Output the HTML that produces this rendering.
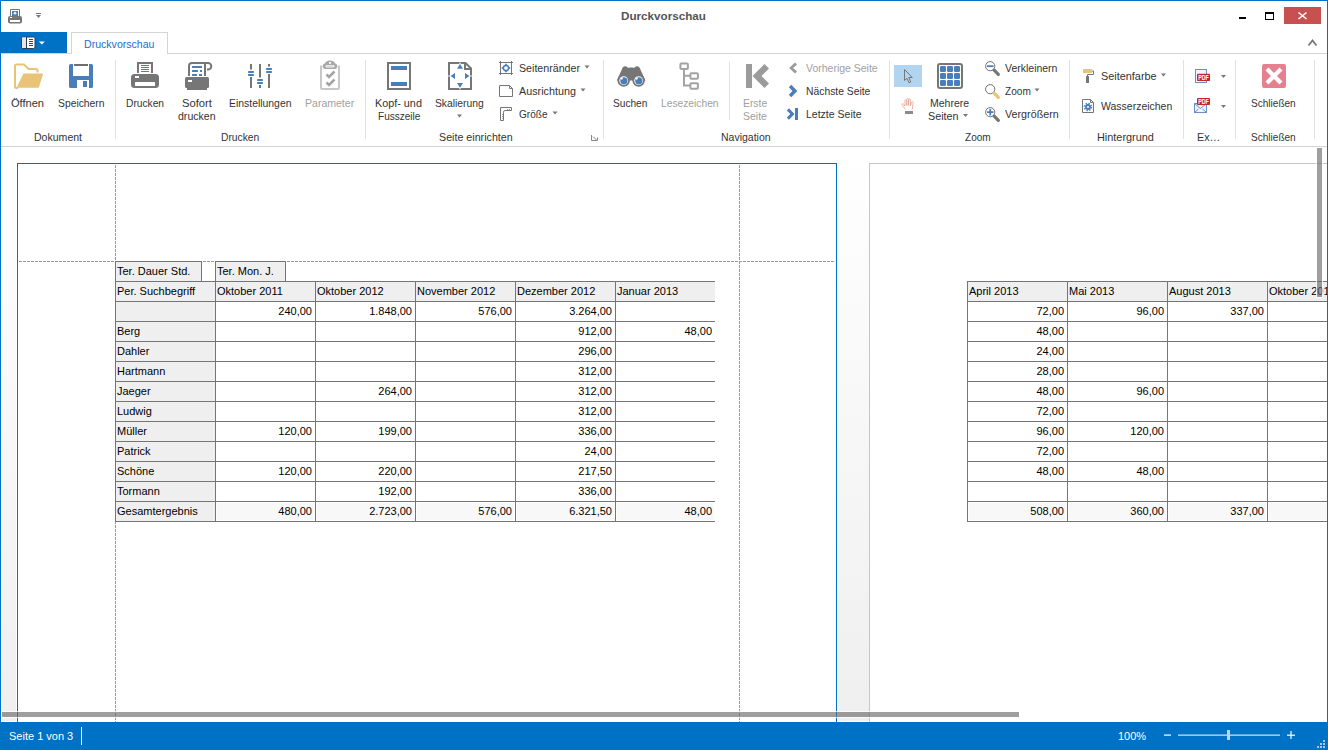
<!DOCTYPE html><html><head><meta charset="utf-8"><style>
*{box-sizing:border-box;margin:0;padding:0}
html,body{width:1328px;height:750px;overflow:hidden;background:#fff;font-family:"Liberation Sans",sans-serif}
.a{position:absolute}
.t{position:absolute;white-space:nowrap;font-size:11px;color:#444;line-height:13px}
.dis{color:#a6a6a6}
.sep{position:absolute;width:1px;background:#e2e2e2;top:60px;height:80px}
.c{position:absolute;font-size:11px;color:#000;line-height:19px;height:19px;white-space:nowrap;overflow:hidden;padding:0 3px 0 1px}
.r{text-align:right}
.g{background:#efefef}
.tg{background:#f8f8f8;box-shadow:inset 0 0 0 1px #fff}
.hl{position:absolute;height:1px;background:#757575}
.vl{position:absolute;width:1px;background:#757575}
</style></head><body>
<div class="a" style="left:1px;top:147px;width:1326px;height:575px;background:linear-gradient(#fff,#efefef)"></div>
<div class="a" style="left:1px;top:147px;width:1px;height:575px;background:#fff"></div>
<div class="a" style="left:1px;top:721px;width:1326px;height:1px;background:#fff"></div>
<div class="a" style="left:16px;top:162px;width:822px;height:600px;background:#fff"></div>
<div class="a" style="left:17px;top:163px;width:820px;height:600px;background:#fff;border:1px solid #0072c6"></div>
<div class="a" style="left:18px;top:261px;width:817px;height:1px;background:repeating-linear-gradient(90deg,transparent 0 1px,#999 1px 4px)"></div>
<div class="a" style="left:115px;top:164px;width:1px;height:560px;background:repeating-linear-gradient(180deg,transparent 0 1px,#999 1px 4px)"></div>
<div class="a" style="left:739px;top:164px;width:1px;height:560px;background:repeating-linear-gradient(180deg,transparent 0 1px,#999 1px 4px)"></div>
<div class="c g" style="left:116px;top:282px;width:99px">Per. Suchbegriff</div>
<div class="c g" style="left:216px;top:282px;width:99px">Oktober 2011</div>
<div class="c g" style="left:316px;top:282px;width:99px">Oktober 2012</div>
<div class="c g" style="left:416px;top:282px;width:99px">November 2012</div>
<div class="c g" style="left:516px;top:282px;width:99px">Dezember 2012</div>
<div class="c g" style="left:616px;top:282px;width:99px">Januar 2013</div>
<div class="c g" style="left:116px;top:302px;width:99px"></div>
<div class="c r" style="left:216px;top:302px;width:99px">240,00</div>
<div class="c r" style="left:316px;top:302px;width:99px">1.848,00</div>
<div class="c r" style="left:416px;top:302px;width:99px">576,00</div>
<div class="c r" style="left:516px;top:302px;width:99px">3.264,00</div>
<div class="c r" style="left:616px;top:302px;width:99px"></div>
<div class="c g" style="left:116px;top:322px;width:99px">Berg</div>
<div class="c r" style="left:216px;top:322px;width:99px"></div>
<div class="c r" style="left:316px;top:322px;width:99px"></div>
<div class="c r" style="left:416px;top:322px;width:99px"></div>
<div class="c r" style="left:516px;top:322px;width:99px">912,00</div>
<div class="c r" style="left:616px;top:322px;width:99px">48,00</div>
<div class="c g" style="left:116px;top:342px;width:99px">Dahler</div>
<div class="c r" style="left:216px;top:342px;width:99px"></div>
<div class="c r" style="left:316px;top:342px;width:99px"></div>
<div class="c r" style="left:416px;top:342px;width:99px"></div>
<div class="c r" style="left:516px;top:342px;width:99px">296,00</div>
<div class="c r" style="left:616px;top:342px;width:99px"></div>
<div class="c g" style="left:116px;top:362px;width:99px">Hartmann</div>
<div class="c r" style="left:216px;top:362px;width:99px"></div>
<div class="c r" style="left:316px;top:362px;width:99px"></div>
<div class="c r" style="left:416px;top:362px;width:99px"></div>
<div class="c r" style="left:516px;top:362px;width:99px">312,00</div>
<div class="c r" style="left:616px;top:362px;width:99px"></div>
<div class="c g" style="left:116px;top:382px;width:99px">Jaeger</div>
<div class="c r" style="left:216px;top:382px;width:99px"></div>
<div class="c r" style="left:316px;top:382px;width:99px">264,00</div>
<div class="c r" style="left:416px;top:382px;width:99px"></div>
<div class="c r" style="left:516px;top:382px;width:99px">312,00</div>
<div class="c r" style="left:616px;top:382px;width:99px"></div>
<div class="c g" style="left:116px;top:402px;width:99px">Ludwig</div>
<div class="c r" style="left:216px;top:402px;width:99px"></div>
<div class="c r" style="left:316px;top:402px;width:99px"></div>
<div class="c r" style="left:416px;top:402px;width:99px"></div>
<div class="c r" style="left:516px;top:402px;width:99px">312,00</div>
<div class="c r" style="left:616px;top:402px;width:99px"></div>
<div class="c g" style="left:116px;top:422px;width:99px">Müller</div>
<div class="c r" style="left:216px;top:422px;width:99px">120,00</div>
<div class="c r" style="left:316px;top:422px;width:99px">199,00</div>
<div class="c r" style="left:416px;top:422px;width:99px"></div>
<div class="c r" style="left:516px;top:422px;width:99px">336,00</div>
<div class="c r" style="left:616px;top:422px;width:99px"></div>
<div class="c g" style="left:116px;top:442px;width:99px">Patrick</div>
<div class="c r" style="left:216px;top:442px;width:99px"></div>
<div class="c r" style="left:316px;top:442px;width:99px"></div>
<div class="c r" style="left:416px;top:442px;width:99px"></div>
<div class="c r" style="left:516px;top:442px;width:99px">24,00</div>
<div class="c r" style="left:616px;top:442px;width:99px"></div>
<div class="c g" style="left:116px;top:462px;width:99px">Schöne</div>
<div class="c r" style="left:216px;top:462px;width:99px">120,00</div>
<div class="c r" style="left:316px;top:462px;width:99px">220,00</div>
<div class="c r" style="left:416px;top:462px;width:99px"></div>
<div class="c r" style="left:516px;top:462px;width:99px">217,50</div>
<div class="c r" style="left:616px;top:462px;width:99px"></div>
<div class="c g" style="left:116px;top:482px;width:99px">Tormann</div>
<div class="c r" style="left:216px;top:482px;width:99px"></div>
<div class="c r" style="left:316px;top:482px;width:99px">192,00</div>
<div class="c r" style="left:416px;top:482px;width:99px"></div>
<div class="c r" style="left:516px;top:482px;width:99px">336,00</div>
<div class="c r" style="left:616px;top:482px;width:99px"></div>
<div class="c g" style="left:116px;top:502px;width:99px">Gesamtergebnis</div>
<div class="c r tg" style="left:216px;top:502px;width:99px">480,00</div>
<div class="c r tg" style="left:316px;top:502px;width:99px">2.723,00</div>
<div class="c r tg" style="left:416px;top:502px;width:99px">576,00</div>
<div class="c r tg" style="left:516px;top:502px;width:99px">6.321,50</div>
<div class="c r tg" style="left:616px;top:502px;width:99px">48,00</div>
<div class="hl" style="left:115px;top:281px;width:600px"></div>
<div class="hl" style="left:115px;top:301px;width:600px"></div>
<div class="hl" style="left:115px;top:321px;width:600px"></div>
<div class="hl" style="left:115px;top:341px;width:600px"></div>
<div class="hl" style="left:115px;top:361px;width:600px"></div>
<div class="hl" style="left:115px;top:381px;width:600px"></div>
<div class="hl" style="left:115px;top:401px;width:600px"></div>
<div class="hl" style="left:115px;top:421px;width:600px"></div>
<div class="hl" style="left:115px;top:441px;width:600px"></div>
<div class="hl" style="left:115px;top:461px;width:600px"></div>
<div class="hl" style="left:115px;top:481px;width:600px"></div>
<div class="hl" style="left:115px;top:501px;width:600px"></div>
<div class="hl" style="left:115px;top:521px;width:600px"></div>
<div class="vl" style="left:115px;top:281px;height:241px"></div>
<div class="vl" style="left:215px;top:281px;height:241px"></div>
<div class="vl" style="left:315px;top:281px;height:241px"></div>
<div class="vl" style="left:415px;top:281px;height:241px"></div>
<div class="vl" style="left:515px;top:281px;height:241px"></div>
<div class="vl" style="left:615px;top:281px;height:241px"></div>
<div class="c g" style="left:116px;top:262px;width:85px">Ter. Dauer Std.</div>
<div class="a" style="left:115px;top:261px;width:87px;height:21px;border:1px solid #757575;border-bottom:none"></div>
<div class="c g" style="left:216px;top:262px;width:69px">Ter. Mon. J.</div>
<div class="a" style="left:215px;top:261px;width:71px;height:21px;border:1px solid #757575;border-bottom:none"></div>
<div class="a" style="left:869px;top:163px;width:600px;height:600px;background:#fff;border:1px solid #c6c6c6"></div>
<div class="c g" style="left:968px;top:282px;width:99px">April 2013</div>
<div class="c g" style="left:1068px;top:282px;width:99px">Mai 2013</div>
<div class="c g" style="left:1168px;top:282px;width:99px">August 2013</div>
<div class="c g" style="left:1268px;top:282px;width:72px">Oktober 2013</div>
<div class="c r" style="left:968px;top:302px;width:99px">72,00</div>
<div class="c r" style="left:1068px;top:302px;width:99px">96,00</div>
<div class="c r" style="left:1168px;top:302px;width:99px">337,00</div>
<div class="c r" style="left:1268px;top:302px;width:72px"></div>
<div class="c r" style="left:968px;top:322px;width:99px">48,00</div>
<div class="c r" style="left:1068px;top:322px;width:99px"></div>
<div class="c r" style="left:1168px;top:322px;width:99px"></div>
<div class="c r" style="left:1268px;top:322px;width:72px"></div>
<div class="c r" style="left:968px;top:342px;width:99px">24,00</div>
<div class="c r" style="left:1068px;top:342px;width:99px"></div>
<div class="c r" style="left:1168px;top:342px;width:99px"></div>
<div class="c r" style="left:1268px;top:342px;width:72px"></div>
<div class="c r" style="left:968px;top:362px;width:99px">28,00</div>
<div class="c r" style="left:1068px;top:362px;width:99px"></div>
<div class="c r" style="left:1168px;top:362px;width:99px"></div>
<div class="c r" style="left:1268px;top:362px;width:72px"></div>
<div class="c r" style="left:968px;top:382px;width:99px">48,00</div>
<div class="c r" style="left:1068px;top:382px;width:99px">96,00</div>
<div class="c r" style="left:1168px;top:382px;width:99px"></div>
<div class="c r" style="left:1268px;top:382px;width:72px"></div>
<div class="c r" style="left:968px;top:402px;width:99px">72,00</div>
<div class="c r" style="left:1068px;top:402px;width:99px"></div>
<div class="c r" style="left:1168px;top:402px;width:99px"></div>
<div class="c r" style="left:1268px;top:402px;width:72px"></div>
<div class="c r" style="left:968px;top:422px;width:99px">96,00</div>
<div class="c r" style="left:1068px;top:422px;width:99px">120,00</div>
<div class="c r" style="left:1168px;top:422px;width:99px"></div>
<div class="c r" style="left:1268px;top:422px;width:72px"></div>
<div class="c r" style="left:968px;top:442px;width:99px">72,00</div>
<div class="c r" style="left:1068px;top:442px;width:99px"></div>
<div class="c r" style="left:1168px;top:442px;width:99px"></div>
<div class="c r" style="left:1268px;top:442px;width:72px"></div>
<div class="c r" style="left:968px;top:462px;width:99px">48,00</div>
<div class="c r" style="left:1068px;top:462px;width:99px">48,00</div>
<div class="c r" style="left:1168px;top:462px;width:99px"></div>
<div class="c r" style="left:1268px;top:462px;width:72px"></div>
<div class="c r" style="left:968px;top:482px;width:99px"></div>
<div class="c r" style="left:1068px;top:482px;width:99px"></div>
<div class="c r" style="left:1168px;top:482px;width:99px"></div>
<div class="c r" style="left:1268px;top:482px;width:72px"></div>
<div class="c r tg" style="left:968px;top:502px;width:99px">508,00</div>
<div class="c r tg" style="left:1068px;top:502px;width:99px">360,00</div>
<div class="c r tg" style="left:1168px;top:502px;width:99px">337,00</div>
<div class="c r tg" style="left:1268px;top:502px;width:72px"></div>
<div class="hl" style="left:967px;top:281px;width:373px"></div>
<div class="hl" style="left:967px;top:301px;width:373px"></div>
<div class="hl" style="left:967px;top:321px;width:373px"></div>
<div class="hl" style="left:967px;top:341px;width:373px"></div>
<div class="hl" style="left:967px;top:361px;width:373px"></div>
<div class="hl" style="left:967px;top:381px;width:373px"></div>
<div class="hl" style="left:967px;top:401px;width:373px"></div>
<div class="hl" style="left:967px;top:421px;width:373px"></div>
<div class="hl" style="left:967px;top:441px;width:373px"></div>
<div class="hl" style="left:967px;top:461px;width:373px"></div>
<div class="hl" style="left:967px;top:481px;width:373px"></div>
<div class="hl" style="left:967px;top:501px;width:373px"></div>
<div class="hl" style="left:967px;top:521px;width:373px"></div>
<div class="vl" style="left:967px;top:281px;height:241px"></div>
<div class="vl" style="left:1067px;top:281px;height:241px"></div>
<div class="vl" style="left:1167px;top:281px;height:241px"></div>
<div class="vl" style="left:1267px;top:281px;height:241px"></div>
<div class="a" style="left:2px;top:712px;width:1017px;height:5px;background:rgba(105,105,105,.64);box-shadow:0 0 0 1px rgba(255,255,255,.75)"></div>
<div class="a" style="left:1317px;top:148px;width:5px;height:149px;background:rgba(105,105,105,.64);box-shadow:0 0 0 1px rgba(255,255,255,.75)"></div>
<div class="a" style="left:1px;top:0;width:1326px;height:147px;background:#fff"></div>
<div class="t" style="left:621px;top:10px;font-size:11px;font-weight:bold;color:#555;transform:scaleX(1.06);transform-origin:0 0">Durckvorschau</div>
<div class="a" style="left:1px;top:32px;width:66px;height:22px;background:#0072c6"></div>
<div class="a" style="left:1px;top:53px;width:1326px;height:1px;background:#d4d4d4"></div>
<div class="a" style="left:71px;top:32px;width:97px;height:22px;border:1px solid #d4d4d4;border-bottom:none;background:#fff"></div>
<div class="t" style="left:83.7px;top:38px;color:#1a6fd0;transform:scaleX(0.961);transform-origin:0 0">Druckvorschau</div>
<div class="a" style="left:1px;top:146px;width:1326px;height:1px;background:#d4d4d4"></div>
<svg class="a" style="left:0;top:0" width="1328" height="147"><rect x="115" y="60" width="1" height="79" fill="#e1e1e1"/>
<rect x="365" y="60" width="1" height="79" fill="#e1e1e1"/>
<rect x="603" y="60" width="1" height="79" fill="#e1e1e1"/>
<rect x="729" y="62" width="1" height="58" fill="#e1e1e1"/>
<rect x="889" y="60" width="1" height="79" fill="#e1e1e1"/>
<rect x="1069" y="60" width="1" height="79" fill="#e1e1e1"/>
<rect x="1183" y="60" width="1" height="79" fill="#e1e1e1"/>
<rect x="1235" y="60" width="1" height="79" fill="#e1e1e1"/>
<rect x="1314" y="60" width="1" height="79" fill="#e1e1e1"/>

<!-- quick access printer -->
<path d="M10.5 16V9.5H19.5V16" fill="none" stroke="#767676" stroke-width="1"/>
<rect x="12" y="11" width="6" height="5" fill="#4a7ebb"/>
<circle cx="15" cy="13.2" r="1.4" fill="#e8eef8"/>
<rect x="8" y="16" width="14" height="7.5" rx="2" fill="#767676"/>
<rect x="10" y="17" width="2" height="1" fill="#fff"/>
<rect x="10" y="20" width="10" height="2" fill="#fff"/>
<rect x="36" y="13" width="5" height="1" fill="#767676"/>
<path d="M36 15h5l-2.5 3z" fill="#767676"/>
<!-- file button icon -->
<rect x="21.5" y="37" width="13.5" height="11.5" rx="1.5" fill="#fff" stroke="#2a3f55" stroke-width="1"/>
<rect x="22" y="37.5" width="4" height="10.5" fill="#e6e6e6"/>
<rect x="26" y="37" width="1" height="12" fill="#2a3f55"/>
<rect x="29" y="39" width="4" height="1" fill="#444"/><rect x="29" y="41" width="4" height="1" fill="#444"/><rect x="29" y="43" width="4" height="1" fill="#444"/><rect x="29" y="45" width="4" height="1" fill="#444"/>
<path d="M38.8 41.5h6l-3 3z" fill="#fff"/>
<!-- Oeffnen folder -->
<path d="M37.5 72.5V70.5a1.5 1.5 0 0 0-1.5-1.5h-7.5l-4.5-4.5h-7.5a1.5 1.5 0 0 0-1.5 1.5V86.5a1.5 1.5 0 0 0 1.5 1.5h1.5" fill="none" stroke="#e9c476" stroke-width="2"/>
<path d="M23.5 73.5H42a1 1 0 0 1 .9 1.3L38.7 87.8H16.5z" fill="#e9c476"/>
<!-- floppy -->
<path d="M70.5 64H73V76H89V64H91.5A1.5 1.5 0 0 1 93 65.5V86.5A1.5 1.5 0 0 1 91.5 88H89V80H77V88H70.5A1.5 1.5 0 0 1 69 86.5V65.5A1.5 1.5 0 0 1 70.5 64z" fill="#4a7ebb"/>
<rect x="74" y="64" width="14" height="2" fill="#6d6d6d"/>
<rect x="83" y="81" width="4" height="6" fill="#4a7ebb"/>
<!-- printer -->
<path d="M138 73V63h14v10" fill="none" stroke="#767676" stroke-width="2"/>
<rect x="141" y="65" width="8" height="1" fill="#4a7ebb"/><rect x="141" y="67" width="8" height="1" fill="#4a7ebb"/><rect x="141" y="69" width="8" height="1" fill="#4a7ebb"/><rect x="141" y="71" width="8" height="1" fill="#4a7ebb"/>
<rect x="131" y="74" width="28" height="14" rx="3.5" fill="#767676"/>
<rect x="135" y="76" width="4" height="2" fill="#fff"/>
<rect x="135" y="82" width="20" height="4" rx="0.5" fill="#fff"/>
<!-- sofort drucken -->
<path d="M189 76V66a3 3 0 0 1 3-3h16a3.3 3.3 0 0 1 0 6.6h-1" fill="none" stroke="#767676" stroke-width="2"/>
<path d="M205 76V64" fill="none" stroke="#767676" stroke-width="2"/>
<rect x="192" y="66" width="10" height="2" rx="0.5" fill="#4a7ebb"/>
<rect x="192" y="70" width="6" height="2" rx="0.5" fill="#4a7ebb"/><rect x="200" y="70" width="2" height="2" fill="#4a7ebb"/>
<rect x="192" y="74" width="5" height="2" rx="0.5" fill="#4a7ebb"/><rect x="199" y="74" width="3" height="2" fill="#4a7ebb"/>
<rect x="185" y="77" width="24" height="11" rx="1.5" fill="#767676"/>
<rect x="187" y="86" width="20" height="4" fill="#767676"/>
<rect x="188" y="80" width="4" height="2" fill="#fff"/>
<!-- einstellungen -->
<rect x="250" y="64" width="2" height="5.5" fill="#767676"/><rect x="250" y="77" width="2" height="11" fill="#767676"/>
<rect x="248" y="71" width="6" height="2" rx="0.8" fill="#4a7ebb"/><rect x="248" y="74" width="6" height="2" rx="0.8" fill="#4a7ebb"/>
<rect x="259" y="64" width="2" height="13.5" fill="#767676"/><rect x="259" y="85" width="2" height="3" fill="#767676"/>
<rect x="257" y="79" width="6" height="2" rx="0.8" fill="#4a7ebb"/><rect x="257" y="82" width="6" height="2" rx="0.8" fill="#4a7ebb"/>
<rect x="268" y="64" width="2" height="2.5" fill="#767676"/><rect x="268" y="74" width="2" height="14" fill="#767676"/>
<rect x="266" y="68" width="6" height="2" rx="0.8" fill="#4a7ebb"/><rect x="266" y="71" width="6" height="2" rx="0.8" fill="#4a7ebb"/>
<!-- parameter (disabled) -->
<path d="M322.5 66.5H321V87.5a1.5 1.5 0 0 0 1.5 1.5H337.5a1.5 1.5 0 0 0 1.5-1.5V66.5H337.5" fill="none" stroke="#c8c8c8" stroke-width="2"/>
<path d="M325 63.5a5 3 0 0 1 10 0h0.5a2 2 0 0 1 1.5 2v1.5a2 2 0 0 1-2 2h-10a2 2 0 0 1-2-2v-1.5a2 2 0 0 1 1.5-2z" fill="#a8a8a8"/>
<rect x="325.5" y="65.2" width="9" height="2.4" rx="1" fill="#fff"/>
<rect x="326.5" y="66.1" width="7" height="0.7" fill="#c8c8c8"/>
<rect x="329" y="62" width="2" height="1.8" fill="#fff"/>
<path d="M326.5 74.5l2.5 2.5 5.5-5.5M326.5 82.5l2.5 2.5 5.5-5.5" fill="none" stroke="#a3a3a3" stroke-width="2.5"/>
<!-- kopf fusszeile -->
<rect x="388" y="63" width="22" height="26" fill="none" stroke="#767676" stroke-width="2"/>
<rect x="391" y="66" width="16" height="4" fill="#4a7ebb"/>
<rect x="391" y="82" width="16" height="4" fill="#4a7ebb"/>
<!-- skalierung -->
<path d="M449 63H465.5L471 68.5V89H449z" fill="#fff" stroke="#767676" stroke-width="2"/>
<path d="M465 63V69H471" fill="none" stroke="#767676" stroke-width="2"/>
<circle cx="460" cy="63.2" r="0.8" fill="#fff"/><circle cx="460" cy="88.8" r="0.8" fill="#fff"/><circle cx="449" cy="76" r="0.8" fill="#fff"/><circle cx="471" cy="76" r="0.8" fill="#fff"/>
<path d="M460 64L463 68.8H457z M460 87.8L463 83H457z M450.5 76L455 73V79z M469.5 76L465 73V79z" fill="#4a7ebb"/>
<path d="M457.0 114.5h5l-2.5 3z" fill="#777"/>
<!-- seitenraender -->
<path d="M499 62.5h14M499 73.5h14M500.5 61v14M511.5 61v14" stroke="#767676" stroke-width="1"/>
<circle cx="506" cy="68" r="2.6" fill="none" stroke="#4a7ebb" stroke-width="1.5"/>
<path d="M506 63.2L507.6 65.4H504.4z M506 72.8L507.6 70.6H504.4z M501.2 68L503.4 66.4V69.6z M510.8 68L508.6 66.4V69.6z" fill="#4a7ebb"/>
<path d="M584.5 65.5h5l-2.5 3z" fill="#777"/>
<!-- ausrichtung -->
<path d="M499.5 85.5H509.5L512.5 88.5V96.5H499.5z" fill="none" stroke="#767676" stroke-width="1"/>
<path d="M509.5 85.5v3h3" fill="none" stroke="#767676" stroke-width="1"/>
<path d="M580.5 88.5h5l-2.5 3z" fill="#777"/>
<!-- groesse -->
<path d="M500.5 107.5H511.5V110.5H505.2Q503.5 110.5 503.5 112.2V120.5H500.5z" fill="none" stroke="#767676" stroke-width="1"/>
<path d="M507.5 110.5v-1.2M509.5 110.5v-1.2M503.5 114.5h-1.2M503.5 116.5h-1.2M503.5 118.5h-1.2" stroke="#767676" stroke-width="1"/>
<path d="M552.5 111.5h5l-2.5 3z" fill="#777"/>
<!-- launcher -->
<path d="M591.5 135v5.5h6M593 136.5l4 4M597.5 137.5v3" fill="none" stroke="#888" stroke-width="1"/>
<!-- binoculars -->
<path d="M621.8 69.5c.5-2 1.5-3.3 3.2-3.3c1.5 0 2.6.9 3.1 1.8c1.8-.6 4.2-.6 6 0c.5-.9 1.6-1.8 3.1-1.8c1.7 0 2.7 1.3 3.2 3.3L645.5 80.5H616.8z" fill="#767676"/>
<circle cx="623.7" cy="80.6" r="6.2" fill="#767676"/><circle cx="638.6" cy="80.6" r="6.2" fill="#767676"/>
<circle cx="623.7" cy="80.6" r="4.4" fill="#fff"/><circle cx="638.6" cy="80.6" r="4.4" fill="#fff"/>
<circle cx="623.9" cy="80.8" r="3.6" fill="#4a7ebb"/><circle cx="638.8" cy="80.8" r="3.6" fill="#4a7ebb"/>
<circle cx="621.8" cy="78.6" r="1.1" fill="#fff"/><circle cx="636.7" cy="78.6" r="1.1" fill="#fff"/>
<!-- lesezeichen -->
<rect x="680.4" y="63.4" width="7.5" height="5.5" rx="1" fill="none" stroke="#a3a3a3" stroke-width="2"/>
<rect x="690.4" y="73.3" width="7.5" height="5.5" rx="1" fill="none" stroke="#a3a3a3" stroke-width="2"/>
<rect x="690.4" y="83.3" width="7.5" height="5.5" rx="1" fill="none" stroke="#a3a3a3" stroke-width="2"/>
<path d="M684 69.5V85.5H690M684 75.8H690" fill="none" stroke="#a3a3a3" stroke-width="2"/>
<!-- erste seite -->
<rect x="746" y="64" width="6" height="24" fill="#9b9b9b"/>
<path d="M764.5 64L769 68.5L761.5 76L769 83.5L764.5 88L752.5 76z" fill="#9b9b9b"/>
<!-- vorherige -->
<path d="M795 62.5L797 64.7L793 68L797 71.3L795 73.5L789.2 68z" fill="#9b9b9b"/>
<!-- naechste -->
<path d="M791.3 84.8L797.3 91L791.3 97.2L788.8 94.7L792.5 91L788.8 87.3z" fill="#4a7ebb"/>
<!-- letzte -->
<path d="M789 108.3L794.5 114L789 119.7L786.8 117.4L790.3 114L786.8 110.6z" fill="#4a7ebb"/>
<rect x="795" y="108" width="3" height="12" fill="#4a7ebb"/>
<!-- select tool -->
<rect x="894" y="65" width="28" height="22" fill="#b1d5f1"/>
<path d="M904.5 69.5V80.5L907 78.3L909 82.8L910.8 82L908.8 77.5H912.3z" fill="none" stroke="#777" stroke-width="1"/>
<!-- hand -->
<path d="M905.5 109.5L902 104.8c-.6-.8.6-1.8 1.3-1L905 106V100.5c0-1.1 1.8-1.1 1.8 0V105.5V99.3c0-1.1 1.8-1.1 1.8 0V105.5V99.8c0-1.1 1.8-1.1 1.8 0V106l1.2-3.8c.4-1 1.9-.6 1.6.4L912.2 109.5" fill="none" stroke="#e9ab9c" stroke-width="0.9"/>
<rect x="905" y="111" width="8" height="3" fill="#8a8a8a"/>
<!-- mehrere seiten -->
<rect x="938" y="64" width="24" height="24" rx="2" fill="none" stroke="#767676" stroke-width="2"/>

<rect x="940" y="66" width="6" height="6" rx="1.2" fill="#4a7ebb"/>
<rect x="940" y="73" width="6" height="6" rx="1.2" fill="#4a7ebb"/>
<rect x="940" y="80" width="6" height="6" rx="1.2" fill="#4a7ebb"/>
<rect x="947" y="66" width="6" height="6" rx="1.2" fill="#4a7ebb"/>
<rect x="947" y="73" width="6" height="6" rx="1.2" fill="#4a7ebb"/>
<rect x="947" y="80" width="6" height="6" rx="1.2" fill="#4a7ebb"/>
<rect x="954" y="66" width="6" height="6" rx="1.2" fill="#4a7ebb"/>
<rect x="954" y="73" width="6" height="6" rx="1.2" fill="#4a7ebb"/>
<rect x="954" y="80" width="6" height="6" rx="1.2" fill="#4a7ebb"/>

<path d="M963.0 114.0h5l-2.5 3z" fill="#777"/>
<!-- magnifiers -->
<circle cx="990.2" cy="66.2" r="4.6" fill="#fff" stroke="#707070" stroke-width="1"/>
<path d="M994.2 70.2L998.3 74.3" stroke="#767676" stroke-width="3.3" stroke-linecap="round"/>
<rect x="987" y="65.3" width="6.5" height="1.8" fill="#4a7ebb"/>
<circle cx="990.2" cy="89.2" r="4.6" fill="#fff" stroke="#707070" stroke-width="1"/>
<path d="M994.2 93.2L998.3 97.3" stroke="#e9c476" stroke-width="3.3" stroke-linecap="round"/>
<path d="M1034.5 88.5h5l-2.5 3z" fill="#777"/>
<circle cx="990.2" cy="112.2" r="4.6" fill="#fff" stroke="#707070" stroke-width="1"/>
<path d="M994.2 116.2L998.3 120.3" stroke="#767676" stroke-width="3.3" stroke-linecap="round"/>
<path d="M987 111.3h6.5v1.8h-6.5zM989.35 109h1.8v6.5h-1.8z" fill="#4a7ebb"/>
<!-- seitenfarbe roller -->
<rect x="1083" y="69" width="9" height="4" rx="0.5" fill="#e9c476"/>
<path d="M1092 71h1.5v3.5h-6v2" fill="none" stroke="#767676" stroke-width="1"/>
<rect x="1086" y="76" width="3" height="7" rx="0.5" fill="#767676"/>
<path d="M1161.0 73.5h5l-2.5 3z" fill="#777"/>
<!-- wasserzeichen -->
<path d="M1082.5 99.5H1090.5L1093.5 102.5V112.5H1082.5z" fill="#fff" stroke="#767676" stroke-width="1"/>
<path d="M1090.5 99.5v3h3" fill="none" stroke="#767676" stroke-width="1"/>
<circle cx="1088" cy="107" r="3.5" fill="none" stroke="#4a7ebb" stroke-width="1.6" stroke-dasharray="1.4 1.35"/>
<circle cx="1088" cy="107" r="2.9" fill="#4a7ebb"/>
<circle cx="1088" cy="107" r="1.1" fill="#fff"/>
<!-- pdf export -->
<rect x="1195.5" y="69.5" width="11" height="13" fill="#f2f5fc" stroke="#6f8cc9" stroke-width="1"/>
<rect x="1197" y="73.8" width="13" height="7.2" rx="0.8" fill="#c9252c"/>
<text x="1198.3" y="79.8" font-family="Liberation Sans" font-weight="bold" font-size="6.5" fill="#fff" textLength="10.5" lengthAdjust="spacingAndGlyphs">PDF</text>
<path d="M1221.0 75.0h5l-2.5 3z" fill="#777"/>
<!-- email pdf -->
<rect x="1194.5" y="103.5" width="12" height="9" fill="#eef2fb" stroke="#6f8cc9" stroke-width="1"/>
<path d="M1194.5 103.5l6 5 6-5M1194.5 112.5l4-3.5M1206.5 112.5l-4-3.5" fill="none" stroke="#6f8cc9" stroke-width="1"/>
<rect x="1197" y="98" width="13" height="7" rx="0.8" fill="#c9252c"/>
<text x="1198.3" y="103.9" font-family="Liberation Sans" font-weight="bold" font-size="6.5" fill="#fff" textLength="10.5" lengthAdjust="spacingAndGlyphs">PDF</text>
<path d="M1221.0 105.0h5l-2.5 3z" fill="#777"/>
<!-- close big -->
<rect x="1262" y="64" width="24" height="24" rx="2" fill="#e5808f"/>
<path d="M1267 69L1281 83M1281 69L1267 83" stroke="#fff" stroke-width="4.2"/>
<!-- window controls -->
<rect x="1239" y="17" width="7" height="2" fill="#000"/>
<rect x="1265.5" y="12.5" width="8" height="7" fill="none" stroke="#000" stroke-width="1"/>
<rect x="1265" y="12" width="9" height="2" fill="#000"/>
<rect x="1284" y="7" width="37" height="17" fill="#c75050"/>
<path d="M1298.5 12.5L1306.5 19M1306.5 12.5L1298.5 19" stroke="#fff" stroke-width="1.6"/>
<path d="M1308.5 45.5L1312.5 40.5L1316.5 45.5" fill="none" stroke="#777" stroke-width="1.8"/>
</svg>
<div class="t" style="left:11.0px;top:97px;color:#333;transform:scaleX(1.006);transform-origin:0 0">Öffnen</div>
<div class="t" style="left:57.7px;top:97px;color:#333;transform:scaleX(0.939);transform-origin:0 0">Speichern</div>
<div class="t" style="left:34.0px;top:131px;color:#333;transform:scaleX(0.958);transform-origin:0 0">Dokument</div>
<div class="t" style="left:125.7px;top:97px;color:#333;transform:scaleX(0.929);transform-origin:0 0">Drucken</div>
<div class="t" style="left:181.5px;top:97px;color:#333;transform:scaleX(1.020);transform-origin:0 0">Sofort</div>
<div class="t" style="left:177.5px;top:110px;color:#333;transform:scaleX(0.959);transform-origin:0 0">drucken</div>
<div class="t" style="left:228.5px;top:97px;color:#333;transform:scaleX(0.946);transform-origin:0 0">Einstellungen</div>
<div class="t" style="left:304.5px;top:97px;color:#a0a0a0;transform:scaleX(0.957);transform-origin:0 0">Parameter</div>
<div class="t" style="left:220.6px;top:131px;color:#333;transform:scaleX(0.932);transform-origin:0 0">Drucken</div>
<div class="t" style="left:375.4px;top:97px;color:#333;transform:scaleX(0.983);transform-origin:0 0">Kopf- und</div>
<div class="t" style="left:377.6px;top:110px;color:#333;transform:scaleX(0.912);transform-origin:0 0">Fusszeile</div>
<div class="t" style="left:435.3px;top:97px;color:#333;transform:scaleX(0.937);transform-origin:0 0">Skalierung</div>
<div class="t" style="left:518.5px;top:62px;color:#333;transform:scaleX(0.968);transform-origin:0 0">Seitenränder</div>
<div class="t" style="left:518.5px;top:85px;color:#333;transform:scaleX(0.979);transform-origin:0 0">Ausrichtung</div>
<div class="t" style="left:518.5px;top:108px;color:#333;transform:scaleX(0.913);transform-origin:0 0">Größe</div>
<div class="t" style="left:438.6px;top:131px;color:#333;transform:scaleX(0.972);transform-origin:0 0">Seite einrichten</div>
<div class="t" style="left:613.4px;top:97px;color:#333;transform:scaleX(0.922);transform-origin:0 0">Suchen</div>
<div class="t" style="left:661.4px;top:97px;color:#a0a0a0;transform:scaleX(0.932);transform-origin:0 0">Lesezeichen</div>
<div class="t" style="left:742.7px;top:97px;color:#a0a0a0;transform:scaleX(0.942);transform-origin:0 0">Erste</div>
<div class="t" style="left:743.0px;top:110px;color:#a0a0a0;transform:scaleX(0.956);transform-origin:0 0">Seite</div>
<div class="t" style="left:806.0px;top:62px;color:#a0a0a0;transform:scaleX(0.953);transform-origin:0 0">Vorherige Seite</div>
<div class="t" style="left:806.0px;top:85px;color:#333;transform:scaleX(0.940);transform-origin:0 0">Nächste Seite</div>
<div class="t" style="left:806.0px;top:108px;color:#333;transform:scaleX(0.955);transform-origin:0 0">Letzte Seite</div>
<div class="t" style="left:721.4px;top:131px;color:#333;transform:scaleX(0.954);transform-origin:0 0">Navigation</div>
<div class="t" style="left:929.7px;top:97px;color:#333;transform:scaleX(0.956);transform-origin:0 0">Mehrere</div>
<div class="t" style="left:928.0px;top:110px;color:#333;transform:scaleX(0.978);transform-origin:0 0">Seiten</div>
<div class="t" style="left:1004.5px;top:62px;color:#333;transform:scaleX(0.953);transform-origin:0 0">Verkleinern</div>
<div class="t" style="left:1004.5px;top:85px;color:#333;transform:scaleX(0.918);transform-origin:0 0">Zoom</div>
<div class="t" style="left:1004.5px;top:108px;color:#333;transform:scaleX(0.976);transform-origin:0 0">Vergrößern</div>
<div class="t" style="left:965.3px;top:131px;color:#333;transform:scaleX(0.915);transform-origin:0 0">Zoom</div>
<div class="t" style="left:1100.7px;top:70px;color:#333;transform:scaleX(0.988);transform-origin:0 0">Seitenfarbe</div>
<div class="t" style="left:1100.7px;top:100px;color:#333;transform:scaleX(0.953);transform-origin:0 0">Wasserzeichen</div>
<div class="t" style="left:1097.3px;top:131px;color:#333;transform:scaleX(0.990);transform-origin:0 0">Hintergrund</div>
<div class="t" style="left:1197.2px;top:131px;color:#333;transform:scaleX(0.975);transform-origin:0 0">Ex…</div>
<div class="t" style="left:1251.3px;top:97px;color:#333;transform:scaleX(0.914);transform-origin:0 0">Schließen</div>
<div class="t" style="left:1251.3px;top:131px;color:#333;transform:scaleX(0.914);transform-origin:0 0">Schließen</div>
<div class="a" style="left:0;top:722px;width:1328px;height:28px;background:#0072c6"></div>
<div class="t" style="left:9px;top:730px;color:#fff">Seite 1 von 3</div>
<div class="a" style="left:81px;top:727px;width:1px;height:18px;background:#fff"></div>
<div class="t" style="left:1118px;top:730px;color:#fff">100%</div>
<svg class="a" style="left:1100px;top:722px" width="228" height="28">
<rect x="64" y="12.5" width="7" height="1.2" fill="#fff"/>
<rect x="78" y="12.6" width="102" height="1" fill="#fff"/>
<rect x="127" y="8" width="3" height="10" fill="#bcd6ee"/>
<rect x="187" y="12.6" width="8" height="1.2" fill="#fff"/><rect x="190.4" y="9" width="1.2" height="8" fill="#fff"/>
<g fill="#a9c7e6"><rect x="223" y="18" width="2" height="2"/><rect x="220" y="21" width="2" height="2"/><rect x="223" y="21" width="2" height="2"/><rect x="217" y="24" width="2" height="2"/><rect x="220" y="24" width="2" height="2"/><rect x="223" y="24" width="2" height="2"/></g>
</svg>
<div class="a" style="left:0;top:0;width:1328px;height:722px;border:1px solid #0072c6;border-bottom:none"></div>
</body></html>
